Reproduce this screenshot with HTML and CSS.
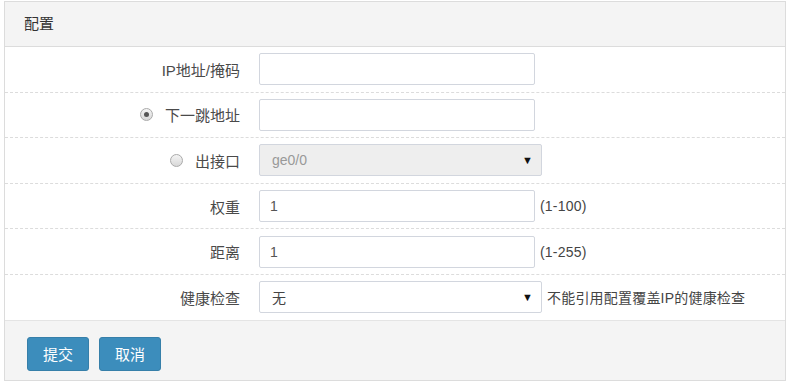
FILE: index.html
```html
<!DOCTYPE html>
<html lang="zh">
<head>
<meta charset="utf-8">
<title>配置</title>
<link rel="stylesheet" href="styles.css">
</head>
<body>
<div class="panel">
  <div class="panel-head">配置</div>
  <div class="panel-body">
    <div class="row">
      <div class="label">IP地址/掩码</div>
      <div class="field"><div class="input"></div></div>
    </div>
    <div class="row">
      <div class="label"><span class="radio checked"></span>下一跳地址</div>
      <div class="field"><div class="input"></div></div>
    </div>
    <div class="row">
      <div class="label"><span class="radio"></span>出接口</div>
      <div class="field"><div class="select disabled"><span>ge0/0</span><span class="arrow">▼</span></div></div>
    </div>
    <div class="row">
      <div class="label">权重</div>
      <div class="field"><div class="input">1</div><span class="hint">(1-100)</span></div>
    </div>
    <div class="row">
      <div class="label">距离</div>
      <div class="field"><div class="input">1</div><span class="hint">(1-255)</span></div>
    </div>
    <div class="row last">
      <div class="label">健康检查</div>
      <div class="field"><div class="select"><span>无</span><span class="arrow">▼</span></div><span class="hint">不能引用配置覆盖IP的健康检查</span></div>
    </div>
  </div>
  <div class="panel-foot">
    <button class="btn">提交</button>
    <button class="btn">取消</button>
  </div>
</div>
</body>
</html>
```

FILE: styles.css
```css
html, body {
  margin: 0;
  padding: 0;
  background: #fff;
}
body {
  font-family: "Liberation Sans", "Noto Sans CJK SC", sans-serif;
  font-size: 15px;
  color: #333;
  padding: 1px 0 0 4px;
}
.panel {
  width: 780px;
  border: 1px solid #dcdcdc;
  background: #fff;
}
.panel-head {
  height: 44px;
  line-height: 44px;
  padding-left: 19px;
  background: #f4f4f4;
  border-bottom: 1px solid #dcdcdc;
  color: #333;
}
.row {
  display: flex;
  align-items: center;
  height: 44.6px;
  border-bottom: 1px dashed #dcdcdc;
}
.row.last {
  border-bottom: none;
}
.label {
  width: 235px;
  display: flex;
  justify-content: flex-end;
  align-items: center;
  color: #4a4a4a;
}
.field {
  margin-left: 19px;
  display: flex;
  align-items: center;
}
.input {
  box-sizing: border-box;
  width: 276px;
  height: 32px;
  border: 1px solid #d2d6de;
  border-radius: 2px;
  padding-left: 10px;
  line-height: 30px;
  color: #555;
  font-size: 14px;
}
.select {
  box-sizing: border-box;
  width: 283px;
  height: 32px;
  border: 1px solid #d2d6de;
  border-radius: 2px;
  padding: 0 8px 0 12px;
  display: flex;
  justify-content: space-between;
  align-items: center;
  color: #444;
  font-size: 14px;
}
.select.disabled {
  background: #eee;
  color: #999;
}
.arrow {
  font-size: 11px;
  color: #111;
}
.hint {
  margin-left: 5px;
  color: #444;
  font-size: 14px;
}
.hint:last-child {
  letter-spacing: 0.2px;
}
.radio {
  box-sizing: border-box;
  width: 13px;
  height: 13px;
  border-radius: 50%;
  border: 1px solid #aaa;
  background: linear-gradient(#f4f4f4, #d8d8d8);
  margin-right: 12px;
  position: relative;
}
.radio.checked::after {
  content: "";
  position: absolute;
  left: 3px;
  top: 3px;
  width: 5px;
  height: 5px;
  border-radius: 50%;
  background: #555;
}
.panel-foot {
  background: #f4f4f4;
  border-top: 1px solid #e4e4e4;
  height: 60px;
  padding: 16px 0 0 22px;
  box-sizing: border-box;
  display: flex;
  gap: 10px;
  align-items: flex-start;
}
.btn {
  width: 62px;
  height: 34px;
  border: 1px solid #367fa9;
  border-radius: 3px;
  background: #3c8dbc;
  color: #fff;
  font-family: "Liberation Sans", "Noto Sans CJK SC", sans-serif;
  font-size: 15px;
  padding: 0;
}
```
